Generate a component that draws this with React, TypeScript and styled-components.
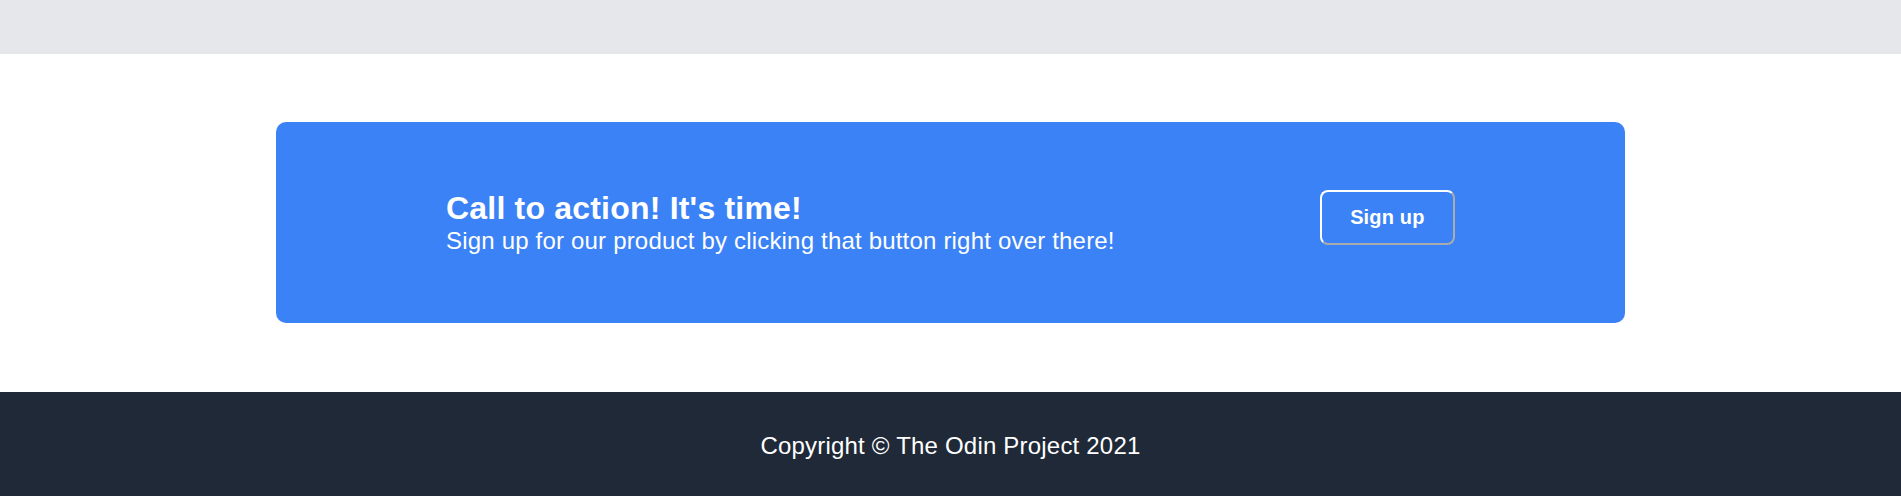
import React from "react";
import styled, { createGlobalStyle } from "styled-components";

const GlobalStyle = createGlobalStyle`
  html, body {
    margin: 0;
    padding: 0;
    background: #ffffff;
    font-family: "Liberation Sans", Arial, sans-serif;
  }
  * { box-sizing: border-box; }
`;

const Page = styled.div`
  display: flex;
  flex-direction: column;
  width: 100%;
`;

const TopBar = styled.header`
  height: 54px;
  background: #e5e7eb;
`;

const Main = styled.main`
  padding: 68px 276px 69px;
  background: #ffffff;
`;

const CtaBox = styled.section`
  display: flex;
  justify-content: space-between;
  align-items: flex-start;
  height: 201px;
  padding: 68px 170px;
  background: #3b82f6;
  border-radius: 10px;
  color: #ffffff;
`;

const TextBlock = styled.div`
  display: flex;
  flex-direction: column;
`;

const Title = styled.h2`
  margin: 0;
  font-size: 32px;
  font-weight: 700;
  line-height: normal;
  letter-spacing: 0.2px;
`;

const Subtitle = styled.p`
  margin: 0;
  font-size: 24px;
  font-weight: 400;
  line-height: normal;
  letter-spacing: 0.19px;
`;

const SignUpButton = styled.button`
  font-family: "Liberation Sans", Arial, sans-serif;
  font-size: 20px;
  font-weight: 700;
  line-height: normal;
  letter-spacing: 0.15px;
  color: #ffffff;
  background: transparent;
  border: 2px outset #ffffff;
  border-radius: 8px;
  padding: 14px 28.5px;
  cursor: pointer;
`;

const Footer = styled.footer`
  height: 104px;
  padding-top: 40px;
  background: #1f2937;
  color: #ffffff;
  text-align: center;
  font-size: 24px;
  line-height: normal;
  letter-spacing: 0.2px;
`;

export default function App() {
  return (
    <Page>
      <GlobalStyle />
      <TopBar />
      <Main>
        <CtaBox>
          <TextBlock>
            <Title>Call to action! It's time!</Title>
            <Subtitle>Sign up for our product by clicking that button right over there!</Subtitle>
          </TextBlock>
          <SignUpButton>Sign up</SignUpButton>
        </CtaBox>
      </Main>
      <Footer>Copyright © The Odin Project 2021</Footer>
    </Page>
  );
}
